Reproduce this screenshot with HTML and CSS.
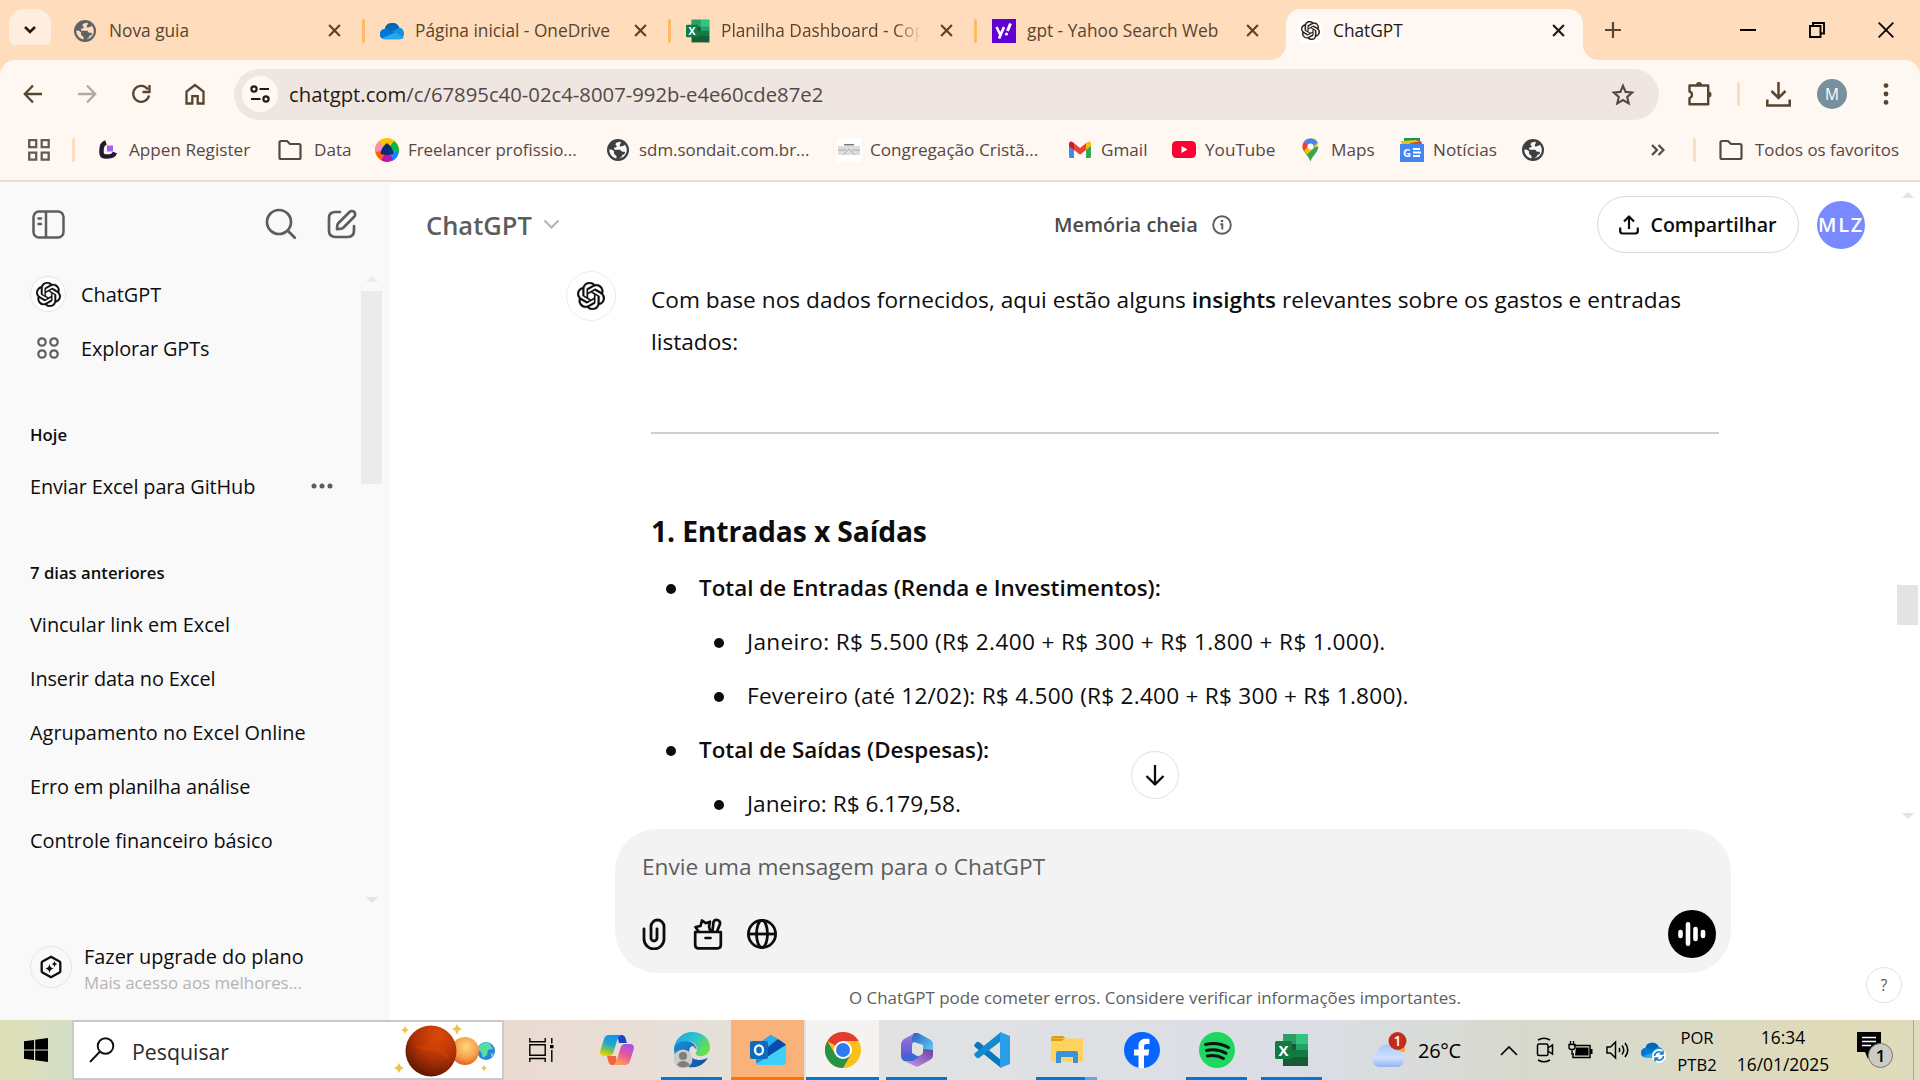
FILE: index.html
```html
<!DOCTYPE html>
<html lang="pt-BR">
<head>
<meta charset="utf-8">
<title>ChatGPT</title>
<link rel="stylesheet" href="styles.css">
</head>
<body>
<svg class="defs" width="0" height="0" aria-hidden="true">
  <defs>
    <symbol id="openai" viewBox="0 0 24 24"><path d="M22.2819 9.8211a5.9847 5.9847 0 0 0-.5157-4.9108 6.0462 6.0462 0 0 0-6.5098-2.9A6.0651 6.0651 0 0 0 4.9807 4.1818a5.9847 5.9847 0 0 0-3.9977 2.9 6.0462 6.0462 0 0 0 .7427 7.0966 5.98 5.98 0 0 0 .511 4.9107 6.051 6.051 0 0 0 6.5146 2.9001A5.9847 5.9847 0 0 0 13.2599 24a6.0557 6.0557 0 0 0 5.7718-4.2058 5.9894 5.9894 0 0 0 3.9977-2.9001 6.0557 6.0557 0 0 0-.7475-7.0729zm-9.022 12.6081a4.4755 4.4755 0 0 1-2.8764-1.0408l.1419-.0804 4.7783-2.7582a.7948.7948 0 0 0 .3927-.6813v-6.7369l2.02 1.1686a.071.071 0 0 1 .038.052v5.5826a4.504 4.504 0 0 1-4.4945 4.4944zm-9.6607-4.1254a4.4708 4.4708 0 0 1-.5346-3.0137l.142.0852 4.783 2.7582a.7712.7712 0 0 0 .7806 0l5.8428-3.3685v2.3324a.0804.0804 0 0 1-.0332.0615L9.74 19.9502a4.4992 4.4992 0 0 1-6.1408-1.6464zM2.3408 7.8956a4.485 4.485 0 0 1 2.3655-1.9728V11.6a.7664.7664 0 0 0 .3879.6765l5.8144 3.3543-2.0201 1.1685a.0757.0757 0 0 1-.071 0l-4.8303-2.7865A4.504 4.504 0 0 1 2.3408 7.872zm16.5963 3.8558L13.1038 8.364 15.1192 7.2a.0757.0757 0 0 1 .071 0l4.8303 2.7913a4.4944 4.4944 0 0 1-.6765 8.1042v-5.6772a.79.79 0 0 0-.407-.667zm2.0107-3.0231l-.142-.0852-4.7735-2.7818a.7759.7759 0 0 0-.7854 0L9.409 9.2297V6.8974a.0662.0662 0 0 1 .0284-.0615l4.8303-2.7866a4.4992 4.4992 0 0 1 6.6802 4.66zM8.3065 12.863l-2.02-1.1638a.0804.0804 0 0 1-.038-.0567V6.0742a4.4992 4.4992 0 0 1 7.3757-3.4537l-.142.0805L8.704 5.459a.7948.7948 0 0 0-.3927.6813zm1.0976-2.3654l2.602-1.4998 2.6069 1.4998v2.9994l-2.5974 1.4997-2.6067-1.4997Z" fill="currentColor" stroke="currentColor" stroke-width=".3"/></symbol>
    <symbol id="x" viewBox="0 0 12 12"><path d="M1 1l10 10M11 1L1 11" stroke="currentColor" stroke-width="2" fill="none"/></symbol>
    <symbol id="globe" viewBox="0 0 22 22"><circle cx="11" cy="11" r="11" fill="currentColor"/><path d="M13.500 2.800c-3 .2-5 1-5 2.700 0 1 1.300.8 1.300 1.800 0 1.500-2.800.8-2.800 2.500 0 1.200 1.200 1 2.700 1h3c1.600.2 1.200 1.700 2.600 2 1.400.2 2.500-.3 2.700 1 .1 1-1 1.700-2.200 2-.9.300-.6 1.300-1.200 2-.5.700-1.700.8-2.200 1.500C17 18.500 19.800 15 19.800 11c0-2-.8-3.800-1.800-5.300-.8 1-2.300 1-3.300 1.600-.8.5-2 .2-2-.8 0-1.400 1.700-1.500.8-3.700zM2.300 10.500c0 4.500 2.900 8 7.100 9 .3-1.200.4-2.200-.4-3-.7-.7-1.900-.8-2-2.200-.1-1 .5-1.600-.3-2.400-1-.9-2.800-1.400-4.400-1.400z" class="globe-land"/></symbol>
    <symbol id="folder" viewBox="0 0 24 22"><path d="M1.500 18.500V3.500q0-1.500 1.500-1.500h6l3 3h9q1.500 0 1.500 1.500v12q0 1.500-1.500 1.500H3q-1.500 0-1.500-1.500z" fill="none" stroke="#544843" stroke-width="2.200"/></symbol>
    <symbol id="excel" viewBox="0 0 34 34"><path d="M8 1h25v32H8z" fill="#21a366"/><path d="M8 1h13v10H8z" fill="#2d9d68"/><path d="M21 1h12v10H21z" fill="#33c481"/><path d="M8 11h13v9H8z" fill="#185c37"/><path d="M21 11h12v6H21z" fill="#21a366"/><path d="M14 17h19v8H14z" fill="#107c41"/><path d="M8 24h25v9H8z" fill="#185c37"/><rect y="8" width="17" height="18" rx="1.500" fill="#107c41"/><text x="8.500" y="22.500" text-anchor="middle" class="glyph" font-size="15" fill="#fff">X</text></symbol>
    <symbol id="cloud" viewBox="0 0 24 18"><path d="M5 17.500a5 5 0 0 1-.5-10A7.500 7.500 0 0 1 18.500 6a6 6 0 0 1 .5 11.500z" fill="#1490df"/><path d="M4.500 7.500A7.500 7.500 0 0 1 18.500 6L10 11z" fill="#0364b8"/><path d="M4.500 7.500c2-.5 4 .5 5.500 1.500l5 3-13 4.500a5 5 0 0 1 2.500-9z" fill="#0078d4"/><path d="M2.500 16L15 11l8 5q-1.500 1.500-4 1.500H5q-1.500 0-2.500-1.500z" fill="#28a8ea"/></symbol>
    <linearGradient id="gEdge" x1="0" y1="0" x2="1" y2=".5"><stop offset="0" stop-color="#1da0e0"/><stop offset=".55" stop-color="#2bc3d2"/><stop offset="1" stop-color="#67e04a"/></linearGradient>
    <linearGradient id="gEdge2" x1="0" y1="0" x2="1" y2="1"><stop offset="0" stop-color="#1b8fdc"/><stop offset="1" stop-color="#0c4f9e"/></linearGradient>
    <linearGradient id="gCop1" x1=".6" y1="0" x2=".3" y2="1"><stop offset="0" stop-color="#1590f0"/><stop offset=".45" stop-color="#24a9c8"/><stop offset=".75" stop-color="#86c43e"/><stop offset="1" stop-color="#f6d000"/></linearGradient>
    <linearGradient id="gCop2" x1=".8" y1="0" x2=".3" y2="1"><stop offset="0" stop-color="#a34ff0"/><stop offset=".5" stop-color="#e7579c"/><stop offset="1" stop-color="#ffa353"/></linearGradient>
    <linearGradient id="g365a" x1="0" y1="0" x2="0" y2="1"><stop offset="0" stop-color="#9f78e0"/><stop offset="1" stop-color="#4a52c8"/></linearGradient>
    <linearGradient id="g365b" x1="0" y1="0" x2="1" y2="1"><stop offset="0" stop-color="#2d5bc0"/><stop offset="1" stop-color="#5ce0ff"/></linearGradient>
    <linearGradient id="g365c" x1="0" y1="1" x2="1" y2="0"><stop offset="0" stop-color="#c79af5"/><stop offset="1" stop-color="#6a4096"/></linearGradient>
    <radialGradient id="gMars" cx=".65" cy=".2" r=".9"><stop offset="0" stop-color="#dd4a08"/><stop offset=".5" stop-color="#b23305"/><stop offset="1" stop-color="#501203"/></radialGradient>
    <radialGradient id="gVenus" cx=".55" cy=".35" r=".7"><stop offset="0" stop-color="#ffd77e"/><stop offset=".6" stop-color="#f79c48"/><stop offset="1" stop-color="#d55a1c"/></radialGradient>
    <linearGradient id="gCloud" x1="0" y1="0" x2="0" y2="1"><stop offset="0" stop-color="#a9c8fb"/><stop offset=".6" stop-color="#cfe0ff"/><stop offset="1" stop-color="#8fb4f2"/></linearGradient>
  </defs>
</svg>

<div class="screen">
  <header class="tabstrip">
    <div class="tab-search"><svg width="14" height="10" viewBox="0 0 14 10"><path d="M2 2l5 5 5-5" fill="none" stroke="#231a12" stroke-width="2.600"/></svg></div>
    <div class="tab"><span class="fav grey"><svg width="22" height="22"><use href="#globe"/></svg></span><span class="tab-title">Nova guia</span><svg class="close" width="13" height="13"><use href="#x"/></svg></div>
    <div class="tab sep"><span class="fav"><svg width="25" height="19"><use href="#cloud"/></svg></span><span class="tab-title">Página inicial - OneDrive</span><svg class="close" width="13" height="13"><use href="#x"/></svg></div>
    <div class="tab sep"><span class="fav"><svg width="24" height="24"><use href="#excel"/></svg></span><span class="tab-title fade">Planilha Dashboard - Cop</span><svg class="close" width="13" height="13"><use href="#x"/></svg></div>
    <div class="tab sep"><span class="fav"><svg width="24" height="24" viewBox="0 0 24 24"><path d="M0 0h24v24H0z" fill="#5f01d1"/><path d="M4.500 8l3.700 7.500M12 8L7 19.500" stroke="#fff" stroke-width="2.700"/><path d="M18.500 4.500L15.500 12" stroke="#fff" stroke-width="3"/><circle cx="14.500" cy="15" r="1.600" fill="#fff"/></svg></span><span class="tab-title">gpt - Yahoo Search Web</span><svg class="close" width="13" height="13"><use href="#x"/></svg></div>
    <div class="tab active"><span class="fav"><svg width="19" height="19"><use href="#openai"/></svg></span><span class="tab-title">ChatGPT</span><svg class="close" width="13" height="13"><use href="#x"/></svg></div>
    <svg class="plus" width="16" height="16" viewBox="0 0 16 16"><path d="M8 0v16M0 8h16" stroke="#574531" stroke-width="2.200"/></svg>
    <div class="win">
      <svg width="16" height="16" viewBox="0 0 16 16"><path d="M0 8h16" stroke="#000" stroke-width="2"/></svg>
      <svg width="16" height="16" viewBox="0 0 16 16"><path d="M1 4h10.500v11H1zM4 4V1h11v10.500h-3.500" fill="none" stroke="#000" stroke-width="1.900"/></svg>
      <svg width="16" height="16" viewBox="0 0 16 16"><path d="M.7.700l14.600 14.600M15.300.700L.7 15.300" stroke="#000" stroke-width="1.800"/></svg>
    </div>
  </header>

  <div class="toolbar">
    <div class="nav">
      <span><svg width="20" height="20" viewBox="0 0 20 20"><path d="M19 10H2M10 1.500L1.800 10l8.200 8.500" fill="none" stroke="#574531" stroke-width="2.300"/></svg></span>
      <span><svg width="20" height="20" viewBox="0 0 20 20"><path d="M1 10h17M10 1.500l8.200 8.500-8.200 8.500" fill="none" stroke="#b1a9a5" stroke-width="2.300"/></svg></span>
      <span><svg width="20" height="20" viewBox="0 0 20 20"><path d="M16.800 5.300A8 8 0 1 0 18 11.500M18.500 1v7h-7" fill="none" stroke="#574531" stroke-width="2.300"/></svg></span>
      <span><svg width="20" height="22" viewBox="0 0 20 22"><path d="M1.500 20.500V8.500L10 2l8.500 6.500v12h-5.800v-7.300H7.300v7.300z" fill="none" stroke="#574531" stroke-width="2.300"/></svg></span>
    </div>
    <div class="omnibox">
      <div class="tune"><svg width="20" height="18" viewBox="0 0 20 18"><g fill="none" stroke="#231a12" stroke-width="2.200"><circle cx="4" cy="4" r="2.600"/><path d="M9.500 4H19M1 14h9.500"/><circle cx="16" cy="14" r="2.600"/></g></svg></div>
      <span class="url"><b>chatgpt.com</b>/c/67895c40-02c4-8007-992b-e4e60cde87e2</span>
      <svg class="star" width="24" height="23" viewBox="0 0 24 23"><path d="M12 2.800l2.600 6.100 6.600.6-5 4.400 1.500 6.500L12 17l-5.700 3.400 1.500-6.500-5-4.400 6.600-.6z" fill="none" stroke="#544843" stroke-width="2.100"/></svg>
    </div>
    <div class="tools">
      <svg width="26" height="26" viewBox="0 0 26 26"><path d="M2.500 4.500h18.700v18.700H2.500v-6a3.500 3.500 0 0 0 0-6.700z" fill="none" stroke="#574531" stroke-width="2.400" stroke-linejoin="round"/><path d="M9 4a3 3 0 0 1 6 0zM21.500 10.500a3 3 0 0 1 0 6z" fill="#574531"/></svg>
      <i class="bar"></i>
      <svg width="25" height="25" viewBox="0 0 25 25"><path d="M12.500 0v15.500M5.500 9l7 7 7-7M1.300 17.500v6h22.400v-6" fill="none" stroke="#574531" stroke-width="2.500"/></svg>
      <span class="profile">M</span>
      <svg width="6" height="22" viewBox="0 0 6 22"><g fill="#574531"><circle cx="3" cy="2.600" r="2.400"/><circle cx="3" cy="11" r="2.400"/><circle cx="3" cy="19.400" r="2.400"/></g></svg>
    </div>
  </div>

  <div class="bookmarks">
    <div class="bm"><span class="bi"><svg width="22" height="22" viewBox="0 0 22 22"><g fill="none" stroke="#655a56" stroke-width="2.300"><path d="M1.200 1.200h7v7h-7zM13.700 1.200h7v7h-7zM1.200 13.700h7v7h-7zM13.700 13.700h7v7h-7z"/></g></svg></span></div>
    <i class="bar"></i>
    <div class="bm"><span class="bi"><svg width="18" height="19" viewBox="0 0 18 19"><path d="M7 2.500Q2.500 4 2.500 10v2.500q0 4 4 4h2q6 0 7.500-4" fill="none" stroke="#241a35" stroke-width="4.500"/><path d="M8 5.500h6v6H8z" fill="#a95cf0"/></svg></span>Appen Register</div>
    <div class="bm wide"><span class="bi"><svg width="24" height="22"><use href="#folder"/></svg></span>Data</div>
    <div class="bm"><span class="bi"><svg width="24" height="24" viewBox="0 0 24 24"><circle cx="12" cy="12" r="12" fill="#ffc400"/><path d="M12 12L1.500 6.500A12 12 0 0 0 6 22z" fill="#ff5a1f"/><path d="M12 12L4 3Q-1 8 .5 14z" fill="#ff8ea8"/><path d="M12 12l7-9q6 5 4.800 12z" fill="#00b84c"/><path d="M12 12l11.800 2.500A12 12 0 0 1 17 23z" fill="#1683ff"/><path d="M12 12l-6 10q6 4 12 0z" fill="#c313a4"/><path d="M12 5c4 3 7 8 6 11q-6 2-12 0c-1-3 2-8 6-11z" fill="#0c2a78"/></svg></span><span class="free">Freelancer profissio...</span></div>
    <div class="bm"><span class="bi dark"><svg width="22" height="22"><use href="#globe"/></svg></span><span class="sdm">sdm.sondait.com.br...</span></div>
    <div class="bm"><span class="bi"><svg width="24" height="24" viewBox="0 0 24 24"><path d="M0 0h24v24H0z" fill="#fff"/><path d="M1 8h22v9H1z" fill="#ddd"/><path d="M7 6h10v1.500H7z" fill="#777"/><path d="M1 12h8M15 12h8M6 17l6-6 6 6" stroke="#aaa" fill="none"/></svg></span>Congregação Cristã...</div>
    <div class="bm"><span class="bi"><svg width="22" height="17" viewBox="0 0 22 17"><path d="M0 2.500h5V17H1.500Q0 17 0 15.500z" fill="#4285f4"/><path d="M17 2.500h5v13q0 1.500-1.500 1.500H17z" fill="#34a853"/><path d="M17 2.200Q19 0 21 .8q1 .7 1 2.200v2l-5 4z" fill="#fbbc04"/><path d="M5 2.200L11 7l6-4.800V9l-6 4.700L5 9z" fill="#ea4335"/><path d="M5 2.200Q3 0 1 .8 0 1.500 0 3v2l5 4z" fill="#c5221f"/></svg></span>Gmail</div>
    <div class="bm"><span class="bi"><svg width="24" height="17" viewBox="0 0 24 17"><rect width="24" height="17" rx="4.500" fill="#f03"/><path d="M9.500 5v7l6-3.500z" fill="#fff"/></svg></span>YouTube</div>
    <div class="bm"><span class="bi"><svg width="17" height="24" viewBox="0 0 17 24"><path d="M8.500 24C8 19 1 15 .5 8.500h16C16 15 9 19 8.500 24z" fill="#34a853"/><path d="M8.500 0A8.500 8.500 0 0 1 16.500 6L5 16.500Q1 13 .5 8.500z" fill="#fbbc04"/><path d="M2 3.500L7 7l-5 6Q-1 8 2 3.500z" fill="#ea4335"/><path d="M2 3.200A8.500 8.500 0 0 1 15.500 4.500L10 10 5 6.500z" fill="#4285f4"/><circle cx="8.500" cy="8.500" r="3" fill="#fff"/></svg></span>Maps</div>
    <div class="bm"><span class="bi"><svg width="24" height="24" viewBox="0 0 24 24"><path d="M4 0h16v6H4z" fill="#0c9d58"/><path d="M1 3l15-1 6 3v5H2z" fill="#fbbc04"/><path d="M10 5l11-2 1.500 4H10z" fill="#ea4335"/><path d="M0 6h24v18H0z" fill="#4285f4"/><text x="7" y="18.500" class="glyph" font-size="11" text-anchor="middle" fill="#fff">G</text><path d="M13 11h7M13 14.500h8M13 18h7" stroke="#fff" stroke-width="2"/></svg></span>Notícias</div>
    <div class="bm"><span class="bi dark"><svg width="22" height="22"><use href="#globe"/></svg></span></div>
    <div class="bm"><span class="bi"><svg width="14" height="12" viewBox="0 0 14 12"><path d="M1 1l5 5-5 5M7.500 1l5 5-5 5" fill="none" stroke="#544843" stroke-width="2.200"/></svg></span></div>
    <i class="bar"></i>
    <div class="bm wide"><span class="bi"><svg width="24" height="22"><use href="#folder"/></svg></span><span class="free">Todos os favoritos</span></div>
  </div>

  <div class="app">
    <aside class="sidebar">
      <div class="side-top">
        <svg width="34" height="29" viewBox="0 0 34 29"><g fill="none" stroke="#5d5d5d" stroke-width="2.500"><rect x="1.500" y="1.500" width="30" height="26" rx="5.500"/><path d="M14 1.500v26"/><path d="M6.500 8.500H9M6.500 14H9" stroke-linecap="round"/></g></svg>
        <span class="grow"></span>
        <svg width="32" height="32" viewBox="0 0 32 32"><g fill="none" stroke="#5d5d5d" stroke-width="2.700" stroke-linecap="round"><circle cx="14" cy="14" r="12"/><path d="M22.800 22.800l7 7"/></g></svg>
        <svg width="30" height="30" viewBox="0 0 30 30"><g fill="none" stroke="#5d5d5d" stroke-width="2.700" stroke-linecap="round" stroke-linejoin="round"><path d="M13 3H8.500Q2 3 2 9v12.500Q2 28 8.500 28h12.200q6.300 0 6.300-6.500V17"/><path d="M11 14.500L22.500 3a3.300 3.300 0 0 1 4.700 4.700L16 19q-1.200 1-6 1.200.200-4.500 1-5.700z"/></g></svg>
      </div>
      <div class="side-body">
        <div class="side-list">
          <div class="row app-row"><span class="ring"><svg width="25" height="25"><use href="#openai"/></svg></span>ChatGPT</div>
          <div class="row app-row"><span class="dots4"><svg width="22" height="22" viewBox="0 0 22 22"><g fill="none" stroke="#5d5d5d" stroke-width="2.200"><circle cx="5" cy="5" r="3.700"/><circle cx="17" cy="5" r="3.700"/><circle cx="5" cy="17" r="3.700"/><circle cx="17" cy="17" r="3.700"/></g></svg></span><span class="tight">Explorar GPTs</span></div>
          <h3>Hoje</h3>
          <div class="row current"><span class="tight">Enviar Excel para GitHub</span><svg width="22" height="6" viewBox="0 0 22 6"><g fill="#5d5d5d"><circle cx="3" cy="3" r="2.500"/><circle cx="11" cy="3" r="2.500"/><circle cx="19" cy="3" r="2.500"/></g></svg></div>
          <h3>7 dias anteriores</h3>
          <div class="row">Vincular link em Excel</div>
          <div class="row"><span class="tight">Inserir data no Excel</span></div>
          <div class="row">Agrupamento no Excel Online</div>
          <div class="row"><span class="tight">Erro em planilha análise</span></div>
          <div class="row">Controle financeiro básico</div>
        </div>
        <div class="scroll side-scroll"><i class="up"></i><i class="thumb"></i><i class="down"></i></div>
      </div>
      <div class="upgrade">
        <span class="ring big"><svg width="22" height="24" viewBox="0 0 22 24"><path d="M11 1.700L19.500 6.500q.8.500.8 1.300v8.400q0 .8-.8 1.300L11 22.300 2.500 17.500q-.8-.5-.8-1.300V7.800q0-.8.8-1.300z" fill="none" stroke="#0d0d0d" stroke-width="2.300"/><path d="M9.500 9q.6 4 4.300 4.500-3.700.6-4.300 4.500-.6-3.900-4.300-4.500Q8.900 13 9.500 9zM14.500 6q.4 2.600 2.700 3-2.300.4-2.700 3-.4-2.600-2.700-3 2.300-.4 2.700-3z" fill="#0d0d0d"/></svg></span>
        <div class="up-text"><p class="up-title">Fazer upgrade do plano</p><p class="up-sub">Mais acesso aos melhores...</p></div>
      </div>
    </aside>

    <main class="main">
      <div class="topbar">
        <div class="model">ChatGPT<svg width="17" height="11" viewBox="0 0 17 11"><path d="M1.500 1.500l7 7 7-7" fill="none" stroke="#b4b4b4" stroke-width="2"/></svg></div>
        <div class="memory">Memória cheia<svg width="20" height="20" viewBox="0 0 20 20"><circle cx="10" cy="10" r="8.800" fill="none" stroke="#5d5d5d" stroke-width="1.900"/><path d="M8.300 9.300H10.300V14.500" fill="none" stroke="#5d5d5d" stroke-width="1.900"/><circle cx="10" cy="6" r="1.300" fill="#5d5d5d"/></svg></div>
        <div class="share"><svg width="20" height="20" viewBox="0 0 20 20"><path d="M10 14V2M5 6.500l5-5 5 5M1.200 12.500v3.500q0 2.500 2.500 2.500h12.600q2.500 0 2.500-2.500v-3.500" fill="none" stroke="#0d0d0d" stroke-width="2.200" stroke-linejoin="round"/></svg>Compartilhar</div>
        <div class="user">MLZ</div>
      </div>
      <div class="thread">
        <div class="ring reply"><svg width="28" height="28"><use href="#openai"/></svg></div>
        <article class="answer">
          <p><span class="lead">Com base nos dados fornecidos, aqui estão alguns <strong>insights</strong> relevantes sobre os gastos e entradas</span> listados:</p>
          <hr>
          <h2>1. Entradas x Saídas</h2>
          <ul>
            <li><strong>Total de Entradas (Renda e Investimentos):</strong>
              <ul>
                <li class="sum">Janeiro: R$ 5.500 (R$ 2.400 + R$ 300 + R$ 1.800 + R$ 1.000).</li>
                <li class="sum feb">Fevereiro (até 12/02): R$ 4.500 (R$ 2.400 + R$ 300 + R$ 1.800).</li>
              </ul>
            </li>
            <li><strong>Total de Saídas (Despesas):</strong>
              <ul><li>Janeiro: R$ 6.179,58.</li></ul>
            </li>
          </ul>
        </article>
        <div class="jump"><svg width="20" height="22" viewBox="0 0 20 22"><path d="M10 1v19M1.500 12l8.500 8.500 8.500-8.500" fill="none" stroke="#0d0d0d" stroke-width="2.300" stroke-linejoin="round"/></svg></div>
      </div>
      <div class="composer">
        <div class="prompt">Envie uma mensagem para o ChatGPT</div>
        <div class="actions">
          <svg width="24" height="32" viewBox="0 0 24 32"><path d="M2 11v10a10 10 0 0 0 20 0V8.500a6.500 6.500 0 0 0-13 0V20a3 3 0 0 0 6 0v-9" fill="none" stroke="#0d0d0d" stroke-width="2.800" stroke-linecap="round"/></svg>
          <svg width="30" height="32" viewBox="0 0 30 32"><g fill="none" stroke="#0d0d0d" stroke-width="2.700" stroke-linejoin="round" stroke-linecap="round"><path d="M2.200 14h25.600v13q0 3.300-3.300 3.300h-19Q2.200 30.300 2.200 27z"/><path d="M12.500 20h5M5.500 13.500L2.500 9l5-1L9 2.500l3.800 2.700 4.200-1.500-1 5 1.500 4.800M19.500 13l1-9q1-2.500 4-2 3 1 2.500 4L24 13.500"/></g></svg>
          <svg width="32" height="32" viewBox="0 0 32 32"><g fill="none" stroke="#0d0d0d" stroke-width="2.800"><circle cx="16" cy="16" r="13.600"/><ellipse cx="16" cy="16" rx="5.500" ry="13.600"/><path d="M2.500 16h27"/></g></svg>
          <span class="grow"></span>
          <span class="voice"><svg width="28" height="24" viewBox="0 0 28 24"><g stroke="#fff" stroke-width="4.600" stroke-linecap="round"><path d="M2.500 10v4M10 2.300v19.400M17.500 7v10M25 10v4"/></g></svg></span>
        </div>
      </div>
      <div class="note">O ChatGPT pode cometer erros. Considere verificar informações importantes.</div>
      <div class="help">?</div>
      <div class="scroll main-scroll"><i class="up"></i><i class="thumb"></i><i class="down"></i></div>
    </main>
  </div>

  <footer class="taskbar">
    <div class="start"><svg width="24" height="24" viewBox="0 0 24 24"><path d="M0 3.300L10 2v9.400H0zM11.200 1.800L24 0v11.400H11.200zM0 12.600h10V22L0 20.700zM11.200 12.600H24V24l-12.800-1.800z"/></svg></div>
    <div class="search">
      <svg width="26" height="26" viewBox="0 0 26 26"><g fill="none" stroke="#111" stroke-width="1.900"><circle cx="16.500" cy="9" r="7.800"/><path d="M11 14.500L1 25"/></g></svg>
      <span>Pesquisar</span>
      <svg class="planets" width="102" height="54" viewBox="0 0 102 54"><g fill="#efc243"><path d="M11 3l1.300 2.700L15 7l-2.700 1.300L11 11 9.700 8.300 7 7l2.700-1.300zM63 1l1.700 3.300L68 6l-3.300 1.700L63 12l-1.700-4.300L58 6l3.300-1.700zM5 40l1.700 3.300L10 45l-3.300 1.700L5 50l-1.700-3.300L0 45l3.300-1.700zM90 42l1 2 2 1-2 1-1 3-1-3-2-1 2-1z"/></g><circle cx="92" cy="28" r="9" fill="#2c7fe3"/><path d="M86 22q6-5 10-1l3 5-5 1-1 5-4 3-2-6-4-3zM97 30l3 1-3 4z" fill="#55dea0"/><circle cx="71" cy="28" r="14" fill="url(#gVenus)"/><circle cx="37" cy="28" r="25.500" fill="url(#gMars)"/><path d="M35 4q-2 12 8 17t12 16q-9-10-20-9T20 20q5 4 11 1t4-17z" fill="#e04d0a" opacity=".3"/></svg>
    </div>
    <div class="apps">
      <span><svg width="26" height="24" viewBox="0 0 26 24"><path d="M.8 0v3.800h15.400V0M.8 24v-3.500h15.400V24M.8 6.800h15.400v10.500H.8zM22.800 0v5.500M22.800 12v12" fill="none" stroke="#000" stroke-width="1.400"/><path d="M21 7h3.500v3.300H21z"/></svg></span>
      <span><svg width="34" height="30" viewBox="0 0 34 30"><path d="M17 0h5q2.500 0 3.300 2.500L27 8h-8z" fill="#1748c4"/><path d="M17 30h-5q-2.500 0-3.300-2.500L7 21h9z" fill="#f4633c"/><path d="M9 0h12q-2.500 1-3.500 4l-4 13q-1 4-4.500 4H3q-4-1-2.500-6L4 4Q5.200 0 9 0z" fill="url(#gCop1)"/><path d="M25 30H13q2.500-1 3.500-4l4-13q1-4 4.500-4h6q4 1 2.500 6L30 26q-1.200 4-5 4z" fill="url(#gCop2)"/></svg></span>
      <span class="run"><svg width="36" height="36" viewBox="0 0 36 36"><path d="M18 0c11 0 18 7 18 15 0 7-6 10-11 9-3-.7-4-2-3-3.500C25 16 21 9 13 9 6 9 1 13 0 17A18 18 0 0 1 18 0z" fill="url(#gEdge)"/><path d="M0 17c0-5 5-8 12-8 6 0 10 4 10.500 8.500L19 14c-5 0-6 11 3 13.500 4 1 9 0 12-2A18 18 0 0 1 0 17z" fill="url(#gEdge2)"/><circle cx="9" cy="27" r="9.500" fill="#ccc"/><circle cx="9" cy="24" r="4" fill="#807e7b"/><path d="M3 33q2-4 6-4t7 4q-7 5-13 0z" fill="#807e7b"/></svg></span>
      <span class="alert"><svg width="36" height="32" viewBox="0 0 36 32"><path d="M6 11L21 1l15 10v16q0 4-4 4H10q-4 0-4-4z" fill="#1490df"/><path d="M9 9l12-8 7 4-17 12z" fill="#28b0ee"/><path d="M28 5l8 5.500-19 13-5-5z" fill="#0a4aa8"/><path d="M6 30l30-19v16q0 4-4 4H10q-2 0-4-1z" fill="#3fd0fa"/><rect y="7" width="18" height="18" rx="2" fill="#0f6cbd"/><ellipse cx="9" cy="16" rx="4" ry="4.700" fill="none" stroke="#fff" stroke-width="2.300"/></svg></span>
      <span class="front"><svg width="36" height="36" viewBox="0 0 36 36"><circle cx="18" cy="18" r="18" fill="#fbc116"/><path d="M18 18L2.400 9A18 18 0 0 1 33.600 9H18z" fill="#e33b2e"/><path d="M2.400 9A18 18 0 0 0 18 36l7.800-13.500L18 27l-7.800-4.500z" fill="#269347"/><circle cx="18" cy="18" r="9" fill="#fff"/><circle cx="18" cy="18" r="7" fill="#2f7bf0"/></svg></span>
      <span class="run"><svg width="32" height="34" viewBox="0 0 32 34"><path d="M14 0L3 6Q0 8 0 11v12q0 3 3 5l8-7V12q0-2 2-3l6-3z" fill="url(#g365a)"/><path d="M13 0h4l11 6q4 2 4 5v12l-10-5v-6L10 8z" fill="url(#g365b)"/><path d="M3 28l11 5q2 1 4 0l11-6q3-2 3-4v-6l-10-1v3q0 2-2 3l-7 3-6-3z" fill="url(#g365c)"/><path d="M11 20l7 4-6 4H3l-3-5z" fill="#3e65d4"/></svg></span>
      <span><svg width="36" height="36" viewBox="0 0 36 36"><path d="M1 12q2-3 4-2l22 18v8L1 15q-1.500-1.500 0-3z" fill="#0b76c0"/><path d="M1 24q2 3 4 2L27 9V0L1 21q-1.500 1.500 0 3z" fill="#1389d0"/><path d="M26 0l10 4v28l-10 4z" fill="#2a9ee8"/></svg></span>
      <span class="run multi"><svg width="32" height="28" viewBox="0 0 32 28"><path d="M0 3q0-3 3-3h9l3 3v6H0z" fill="#dd9d0c"/><rect y="2.500" x="0" width="32" height="23" rx="1.500" fill="#ffd35c"/><path d="M0 3h13L11 5H0z" fill="#dd9d0c"/><path d="M5 27V17q0-2 2-2h18q2 0 2 2v10h-5v-6H10v6z" fill="#3a92dc"/></svg></span>
      <span><svg width="36" height="36" viewBox="0 0 36 36"><circle cx="18" cy="18" r="18" fill="#0866ff"/><path d="M14.500 36V23.500H10v-6h4.500V14c0-5 3-7.300 7-7.300 1.700 0 3 .2 4 .4v5h-3c-2 0-2.500 1.200-2.500 2.700v2.700h5.300l-1 6H20V36z" fill="#fff"/></svg></span>
      <span class="run"><svg width="36" height="36" viewBox="0 0 36 36"><circle cx="18" cy="18" r="18" fill="#1ed760"/><path d="M6.500 12.500q12-3 23 3M7.500 18.500q10-2.500 19.500 2.700M8.500 24q8.500-2 16 2.500" fill="none" stroke="#111" stroke-width="3" stroke-linecap="round"/></svg></span>
      <span class="run"><svg width="36" height="34"><use href="#excel"/></svg></span>
    </div>
    <div class="tray">
      <svg class="weather" width="37" height="37" viewBox="0 0 37 37"><path d="M20 4h15v16H20z" fill="#f59b26" opacity=".8"/><path d="M8 35a8 8 0 0 1-1-15A11 11 0 0 1 27 18a9 9 0 0 1 2 17z" fill="url(#gCloud)"/><circle cx="27.500" cy="9" r="9" fill="#c42b1c"/><text x="27.500" y="14" font-size="14" text-anchor="middle" fill="#fff" class="glyph-r">1</text></svg>
      <span class="temp">26°C</span>
      <svg class="t-up" width="18" height="11" viewBox="0 0 18 11"><path d="M1 10l8-8 8 8" fill="none" stroke="#000" stroke-width="1.600"/></svg>
      <svg class="t-meet" width="18" height="26" viewBox="0 0 18 26"><g fill="none" stroke="#000" stroke-width="1.500"><rect x="1.500" y="7" width="10.500" height="11.500" rx="1.500"/><path d="M12 11l4.500-3v9l-4.500-3M2 3q6-3.500 12 0M2 23q6 3.500 12 0"/></g></svg>
      <svg class="t-bat" width="25" height="18" viewBox="0 0 25 18"><path d="M6 4.500h16v12H5v-3" fill="none" stroke="#000" stroke-width="1.500"/><path d="M8 6.500h12.500v8H7zM22 8h2.500v5H22z"/><path d="M1 3.500h6v3q0 2-3 2t-3-2zM2.500 0v3M5.500 0v3M4 8v5h2" fill="none" stroke="#000" stroke-width="1.400"/></svg>
      <svg class="t-vol" width="24" height="20" viewBox="0 0 24 20"><g fill="none" stroke="#000" stroke-width="1.500"><path d="M1 7h3.500L9.500 2v16l-5-5H1zM13 8q1.500 2 0 4M16 5.500q3.500 4.500 0 9M19 3q5.500 7 0 14"/></g></svg>
      <svg class="t-one" width="25" height="22" viewBox="0 0 25 22"><svg width="23" height="17"><use href="#cloud"/></svg><circle cx="18" cy="15" r="7" fill="#fff"/><path d="M13.500 15a4.500 4.500 0 0 1 8-2.500M22.500 15a4.500 4.500 0 0 1-8 2.500M22 9.500v3.500h-3.500M14 20.500V17h3.500" fill="none" stroke="#1877c9" stroke-width="1.500"/></svg>
      <div class="lang"><span>POR</span><span>PTB2</span></div>
      <div class="clock"><span>16:34</span><span>16/01/2025</span></div>
      <svg class="notif" width="36" height="42" viewBox="0 0 36 42"><path d="M0 0h24v20H15l-4 7-3-7H0z"/><path d="M5 5.500h14M5 9.500h14M5 13.500h9" stroke="#fff" stroke-width="1.300"/><circle cx="23.500" cy="23.500" r="12" fill="#ccccc4" stroke="#777" stroke-width="1"/><text x="23.500" y="29.500" text-anchor="middle" font-size="17" class="glyph-r">1</text></svg>
      <i class="peek"></i>
    </div>
  </footer>
</div>
</body>
</html>
```

FILE: styles.css
```css
* { box-sizing: border-box; }
body { margin: 0; font-family: "Open Sans", "Noto Sans", sans-serif; color: #0d0d0d; overflow: hidden; }
p, h2, h3, ul { margin: 0; padding: 0; }
svg { display: block; flex: none; }
.defs { position: absolute; }
.grow { flex: 1; }
.glyph { font-family: "Open Sans", sans-serif; font-weight: 700; }
.glyph-r { font-family: "Open Sans", sans-serif; font-weight: 600; }
.screen { width: 1920px; height: 1080px; display: flex; flex-direction: column; overflow: hidden; background: #fff; }

/* Tab strip */
.tabstrip { height: 60px; display: flex; align-items: center; background: #ffdcbb; padding-left: 9px; flex: none; }
.tab-search { width: 42px; height: 42px; border-radius: 15px; background: #ffeddf; display: flex; align-items: center; justify-content: center; margin-right: 6px; }
.tab { width: 306px; height: 60px; padding: 1px 22px 0 15px; display: flex; align-items: center; position: relative; color: #574531; flex: none; }
.tab.sep::before { content: ""; position: absolute; left: -1px; top: 19px; width: 3px; height: 24px; border-radius: 2px; background: #ffb968; }
.fav { width: 28px; height: 28px; margin-right: 9px; display: flex; align-items: center; justify-content: center; flex: none; }
.grey { color: #5f6368; --land: #ffdcbb; margin: 0 10px 0 -1px; }
.dark { color: #3c4043; --land: #fff7f2; }
.globe-land { fill: var(--land); }
.tab-title { width: 207px; font-size: 17.3px; white-space: nowrap; flex: none; }
.fade { width: 207px; -webkit-mask-image: linear-gradient(90deg, #000 84%, transparent 97%); mask-image: linear-gradient(90deg, #000 84%, transparent 97%); }
.close { margin-left: 12px; }
.tab.active { color: #231a12; z-index: 1; }
.tab.active .fav { background: #fff; border-radius: 6px; width: 24px; height: 24px; margin: 0 11px 0 2px; }
.tab.active::before { content: ""; position: absolute; z-index: -1; left: 5px; right: 4px; top: 9px; bottom: 0; border-radius: 15px 15px 0 0; background: #fff7f2; }
.tab.active::after { content: ""; position: absolute; z-index: -1; left: -10px; right: -11px; bottom: 0; height: 15px; background: radial-gradient(circle at 0 0, transparent 14.500px, #fff7f2 15px) left / 15px 15px no-repeat, radial-gradient(circle at 100% 0, transparent 14.500px, #fff7f2 15px) right / 15px 15px no-repeat; }
.plus { margin-left: 18px; }
.win { margin-left: auto; display: flex; gap: 53px; padding-right: 26px; }

/* Toolbar */
.toolbar { height: 68px; background: #fff7f2; border-radius: 15px 15px 0 0; box-shadow: 0 -15px 0 0 #ffdcbb; display: flex; align-items: center; flex: none; position: relative; }
.nav { display: flex; width: 234px; padding-left: 6px; }
.nav span { width: 54px; display: flex; justify-content: center; align-items: center; }
.omnibox { width: 1425px; height: 51px; border-radius: 26px; background: #efe6e2; display: flex; align-items: center; padding: 0 24px 0 8px; }
.tune { width: 36px; height: 36px; border-radius: 50%; background: #fff7f2; display: flex; align-items: center; justify-content: center; margin-right: 11px; }
.url { font-size: 20.300px; color: #544843; flex: 1; }
.url b { font-weight: 400; color: #231a12; }
.tools { display: flex; align-items: center; padding-left: 28px; }
.bar { width: 3px; height: 24px; border-radius: 2px; background: #ffdcbb; display: block; }
.tools .bar { margin: 0 26px 0 24px; }
.profile { width: 30px; height: 30px; border-radius: 50%; background: #78909c; color: #fff; font-size: 15.500px; display: flex; align-items: center; justify-content: center; margin: 0 36px 0 26px; }

/* Bookmarks */
.bookmarks { height: 54px; flex: none; background: #fff7f2; border-bottom: 2px solid #f0dccb; display: grid; grid-template-columns: 45px 24px 182px 97px 231px 231px 231px 104px 126px 102px 121px 125px 47px 26px 1fr; padding: 0 0 9px 27px; align-items: center; font-size: 17.150px; color: #544843; white-space: nowrap; }
.bm { display: flex; align-items: center; gap: 9px; }
.wide { gap: 12px; }
.bi { width: 24px; display: flex; justify-content: center; }
.sdm { font-size: 16.900px; }
.free { font-size: 16.900px; }

/* Scrollbars */
.scroll { display: flex; flex-direction: column; align-items: center; }
.up, .down { border: 6px solid transparent; width: 0; height: 0; flex: none; }
.up { border-top: 0; border-bottom-color: #e3e3e3; }
.down { border-bottom: 0; border-top-color: #e3e3e3; margin-top: auto; }
.thumb { width: 21px; background: #ebebeb; }

/* Sidebar */
.app { flex: 1; display: flex; min-height: 0; }
.sidebar { width: 390px; background: #f9f9f9; display: flex; flex-direction: column; font-size: 19.900px; }
.side-top { height: 84px; display: flex; align-items: center; padding: 0 33px 0 32px; gap: 30px; }
.side-body { display: flex; height: 654px; }
.side-list { width: 361px; padding: 1px 0 0 30px; }
.row { height: 54px; display: flex; align-items: center; white-space: nowrap; }
.tight { letter-spacing: -.120px; }
.current { justify-content: space-between; padding-right: 28px; }
.ring, .dots4 { width: 36px; height: 36px; display: flex; align-items: center; justify-content: center; margin-right: 15px; flex: none; }
.ring { border: 1.500px solid #e5e5e5; border-radius: 50%; background: #fff; }
.side-list h3 { font-size: 16.700px; font-weight: 600; line-height: 24px; margin: 48px 0 12px; }
.side-scroll { width: 21px; padding: 10px 0 0; height: 637px; }
.side-scroll .thumb { height: 193px; margin-top: 9px; }
.side-scroll .up { border-bottom-color: #ebebeb; }
.upgrade { flex: 1; display: flex; align-items: center; padding: 0 0 6px 30px; }
.big { width: 42px; height: 42px; margin-right: 12px; background: none; }
.up-text { padding-top: 4px; }
.up-title { line-height: 28px; }
.up-sub { font-size: 16.850px; line-height: 24px; color: #b4b4b4; }

/* Conversation */
.main { flex: 1; display: flex; flex-direction: column; position: relative; }
.topbar { height: 84px; display: flex; align-items: center; padding: 1px 0 0 36px; flex: none; }
.model { width: 628px; display: flex; align-items: center; font-size: 25.500px; font-weight: 600; color: #5d5d5d; gap: 11px; }
.memory { width: 543px; display: flex; align-items: center; gap: 14px; font-size: 20.050px; font-weight: 600; color: #4a4a4a; }
.share { width: 202px; height: 57px; border: 1px solid #d9d9d9; border-radius: 29px; display: flex; align-items: center; justify-content: center; gap: 11px; font-size: 19.600px; font-weight: 600; }
.user { width: 48px; height: 48px; border-radius: 50%; background: #7989ff; color: #fff; margin-left: 18px; overflow: hidden; font-size: 20px; font-weight: 600; letter-spacing: 1.700px; display: flex; align-items: center; justify-content: center; }
.thread { height: 563px; overflow: hidden; display: flex; padding-left: 176px; align-items: flex-start; position: relative; }
.reply { width: 50px; height: 50px; margin: 5px 35px 0 0; border-color: #ececec; }
.answer { width: 1068px; padding-top: 13px; font-size: 22.650px; line-height: 42px; }
.answer strong { font-weight: 600; font-size: 22.400px; }
.lead { white-space: nowrap; letter-spacing: .025px; }
hr { border: 0; height: 2px; background: #d0d0d0; margin: 69px 0 76px; }
h2 { font-size: 28.300px; font-weight: 700; line-height: 42px; margin-bottom: 15px; letter-spacing: -.150px; }
.answer ul { list-style: none; }
.answer li { padding-left: 48px; position: relative; }
.answer li::before { content: ""; position: absolute; left: 15px; top: 17px; width: 10px; height: 10px; border-radius: 50%; background: #0d0d0d; }
.answer li li { margin-top: 12px; }
.answer li + li { margin-top: 12px; }
.sum { letter-spacing: .330px; }
.feb { letter-spacing: .230px; }
.jump { position: absolute; left: 741px; top: 485px; width: 48px; height: 48px; border-radius: 50%; border: 1px solid #e0e0e0; background: #fff; display: flex; align-items: center; justify-content: center; }
.composer { width: 1116px; height: 144px; margin-left: 225px; border-radius: 42px; background: #f3f3f3; padding: 18px 15px 15px 27px; flex: none; }
.prompt { font-size: 22.650px; line-height: 40px; color: #5d5d5d; }
.actions { display: flex; align-items: center; gap: 23px; height: 48px; margin-top: 23px; }
.actions > svg:nth-child(2) { margin-left: 4px; }
.voice { width: 48px; height: 48px; border-radius: 50%; background: #000; display: flex; align-items: center; justify-content: center; }
.note { font-size: 16.930px; color: #5d5d5d; line-height: 24px; margin: 13px 0 0 459px; }
.help { position: absolute; left: 1476px; top: 785px; width: 36px; height: 36px; border: 1px solid #e0e0e0; border-radius: 50%; font-size: 16px; color: #5d5d5d; display: flex; align-items: center; justify-content: center; }
.main-scroll { position: absolute; right: 2px; top: 10px; height: 627px; width: 21px; }
.main-scroll .thumb { height: 40px; margin-top: 387px; background: #e3e3e3; }

/* Taskbar */
.taskbar { height: 60px; flex: none; display: flex; align-items: center; background: linear-gradient(90deg, #dfdfb5 0, #d4dec6 72px, #eadbd1 503px, #e6dfd9 700px, #e1e2e2 900px, #dcdfe4 1150px, #dadee4 1330px, #d8d9cf 1500px, #d9dac9 1650px, #e0dbb6 1840px, #dedbbd 1920px); }
.start { width: 72px; display: flex; justify-content: center; }
.search { width: 432px; height: 60px; background: #fff; border: 2px solid #c9c9c9; display: flex; align-items: center; padding: 0 6px 0 15px; font-size: 21.300px; color: #2b2b2b; }
.search span { margin: 2px 0 0 17px; flex: 1; }
.apps { display: flex; height: 60px; }
.apps span { width: 75px; display: flex; align-items: center; justify-content: center; position: relative; }
.run::after, .alert::after, .front::after { content: ""; position: absolute; left: 7px; right: 7px; bottom: 0; height: 3px; background: #0078d7; }
.alert::after, .front::after { left: 0; right: 0; }
.apps .alert { background: #fab27b; width: 73px; margin: 0 2px; }
.apps .front { background: #f4f3f2; width: 73px; }
.alert::after { background: #ff7300; }
.multi::after { background: linear-gradient(90deg, #0078d7 80%, #62a8e0 80%); }
.tray { flex: 1; height: 60px; display: flex; align-items: center; padding-left: 41px; font-size: 17.400px; color: #000; }
.temp { font-size: 20px; width: 47px; margin: 1px 0 0 11px; white-space: nowrap; letter-spacing: -.300px; }
.t-up { margin-left: 35px; }
.t-meet { margin-left: 18px; }
.t-bat { margin-left: 14px; }
.t-vol { margin-left: 13px; }
.t-one { margin-left: 11px; margin-top: 3px; }
.lang, .clock { display: flex; flex-direction: column; align-items: center; line-height: 27px; padding-top: 1px; }
.lang { width: 38px; margin-left: 12px; font-size: 16.600px; }
.clock { width: 94px; margin-left: 20px; }
.notif { margin: 5px 18px 0 27px; }
.peek { width: 1px; height: 60px; background: #aaa88f; margin-left: auto; margin-right: 6px; }
```
